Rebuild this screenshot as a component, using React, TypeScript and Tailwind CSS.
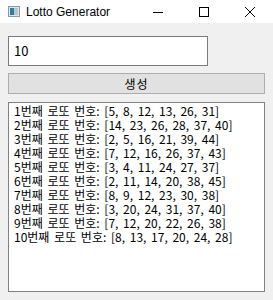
import React from "react";

const rows = [
  [5, 8, 12, 13, 26, 31],
  [14, 23, 26, 28, 37, 40],
  [2, 5, 16, 21, 39, 44],
  [7, 12, 16, 26, 37, 43],
  [3, 4, 11, 24, 27, 37],
  [2, 11, 14, 20, 38, 45],
  [8, 9, 12, 23, 30, 38],
  [3, 20, 24, 31, 37, 40],
  [7, 12, 20, 22, 26, 38],
  [8, 13, 17, 20, 24, 28],
];

const ko = { fontFamily: '"Noto Sans CJK KR", "Liberation Sans", sans-serif' };

export default function App() {
  return (
    <div className="w-[273px] h-[300px] bg-[#f0f0f0] flex flex-col overflow-hidden">
      <TitleBar />

      <div className="flex-1 flex flex-col px-[8px] pt-[13px] pb-[8px]">
        <div
          className="w-[200px] h-[30px] bg-white border border-[#7a7a7a] px-[5px] flex items-center text-[13px] text-black"
          style={ko}
        >
          10
        </div>

        <button
          className="mt-[7px] h-[21px] w-full bg-[#e1e1e1] border border-[#adadad] text-[12px] leading-none text-black tracking-[1px]"
          style={ko}
        >
          생성
        </button>

        <div
          className="mt-[8px] flex-1 bg-white border border-[#828282] px-[5px] pt-[1px] text-[12px] leading-[14px] text-black [word-spacing:2px]"
          style={ko}
        >
          {rows.map((nums, i) => (
            <div key={i} className="whitespace-nowrap">
              {i + 1}번째 로또 번호: [{nums.join(", ")}]
            </div>
          ))}
        </div>
      </div>
    </div>
  );
}

function TitleBar() {
  return (
    <div className="h-[23px] bg-white flex items-center">
      <div className="w-[26px] flex justify-center pl-[1px]">
        <svg width="12" height="11" viewBox="0 0 12 11">
          <rect x="0.5" y="0.5" width="11" height="10" fill="#dfe6ea" stroke="#8a9aa6" />
          <rect x="2" y="2" width="4" height="7" fill="#2f7f9a" />
          <rect x="6" y="2" width="4" height="7" fill="#b9c6ce" />
        </svg>
      </div>
      <span
        className="text-[12px] text-black"
        style={{ fontFamily: '"Liberation Sans", Arial, sans-serif' }}
      >
        Lotto Generator
      </span>
      <div className="ml-auto flex h-full">
        <div className="w-[46px] flex items-center justify-center">
          <svg width="10" height="10" viewBox="0 0 10 10">
            <line x1="0" y1="5.5" x2="10" y2="5.5" stroke="#000" strokeWidth="1" />
          </svg>
        </div>
        <div className="w-[46px] flex items-center justify-center">
          <svg width="10" height="10" viewBox="0 0 10 10">
            <rect x="0.5" y="0.5" width="9" height="9" fill="none" stroke="#000" strokeWidth="1" />
          </svg>
        </div>
        <div className="w-[46px] flex items-center justify-center">
          <svg width="10" height="10" viewBox="0 0 10 10">
            <path d="M0 0 L10 10 M10 0 L0 10" stroke="#000" strokeWidth="1" />
          </svg>
        </div>
      </div>
    </div>
  );
}
